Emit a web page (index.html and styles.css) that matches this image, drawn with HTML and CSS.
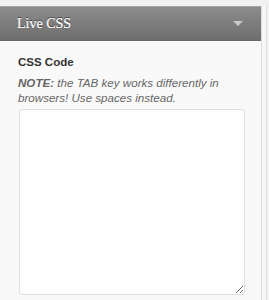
FILE: index.html
```html
<!doctype html>
<html lang="en">
<head>
  <meta charset="utf-8">
  <title>Live CSS</title>
  <link rel="stylesheet" href="styles.css">
</head>
<body>
  <div class="sidebar">
    <div class="widget">
      <div class="widget-top">
        <div class="widget-title">Live CSS</div>
        <div class="widget-arrow"></div>
      </div>
      <div class="widget-inside">
        <label for="css" class="field-label">CSS Code</label>
        <p class="note"><strong>NOTE:</strong> the TAB key works differently in browsers! Use spaces instead.</p>
        <textarea id="css" class="code"></textarea>
      </div>
    </div>
    <div class="gutter"></div>
  </div>
</body>
</html>
```

FILE: styles.css
```css
html, body {
  margin: 0;
  padding: 0;
  height: 100%;
  background: #f1f1f1;
}
body {
  font-family: 'Liberation Sans', Arial, sans-serif;
  overflow: hidden;
}
.sidebar {
  display: flex;
  padding-top: 6px;
  height: 100%;
  box-sizing: border-box;
}
.widget {
  width: 261px;
  background: #f9f9f9;
  border-right: 1px solid #dcdcdc;
  flex-shrink: 0;
}
.widget-top {
  height: 35px;
  box-sizing: border-box;
  display: flex;
  align-items: center;
  justify-content: space-between;
  padding: 0 18px 0 17px;
  background: linear-gradient(180deg, #8c8c8c 0%, #6e6e6e 100%);
  border-top: 1px solid #a3a3a3;
  border-bottom: 1px solid #6a6a6a;
}
.widget-title {
  font-family: 'Liberation Serif', Georgia, serif;
  font-size: 14px;
  color: #fff;
  text-shadow: 0 -1px 0 #3a3a3a, 0 0 0.4px #fff;
  margin-top: 1px;
}
.widget-arrow {
  width: 0;
  height: 0;
  border-left: 5px solid transparent;
  border-right: 5px solid transparent;
  border-top: 5px solid #c8c8c8;
}
.widget-inside {
  padding: 14px 17px 0 18px;
}
.field-label {
  display: block;
  font-size: 11.5px;
  line-height: 14px;
  font-weight: bold;
  color: #333;
  margin-bottom: 6px;
}
.note {
  margin: 0 0 4px 0;
  font-size: 11.6px;
  font-style: italic;
  line-height: 15px;
  color: #666;
}
.note strong {
  color: #666;
}
.code {
  display: block;
  width: 226px;
  height: 186px;
  margin-left: 1px;
  box-sizing: border-box;
  border: 1px solid #dfdfdf;
  border-radius: 3px;
  background: #fff;
}
.gutter {
  width: 4px;
  background: #f7f7f7;
  border-right: 1px solid #e2e2e2;
}
```
